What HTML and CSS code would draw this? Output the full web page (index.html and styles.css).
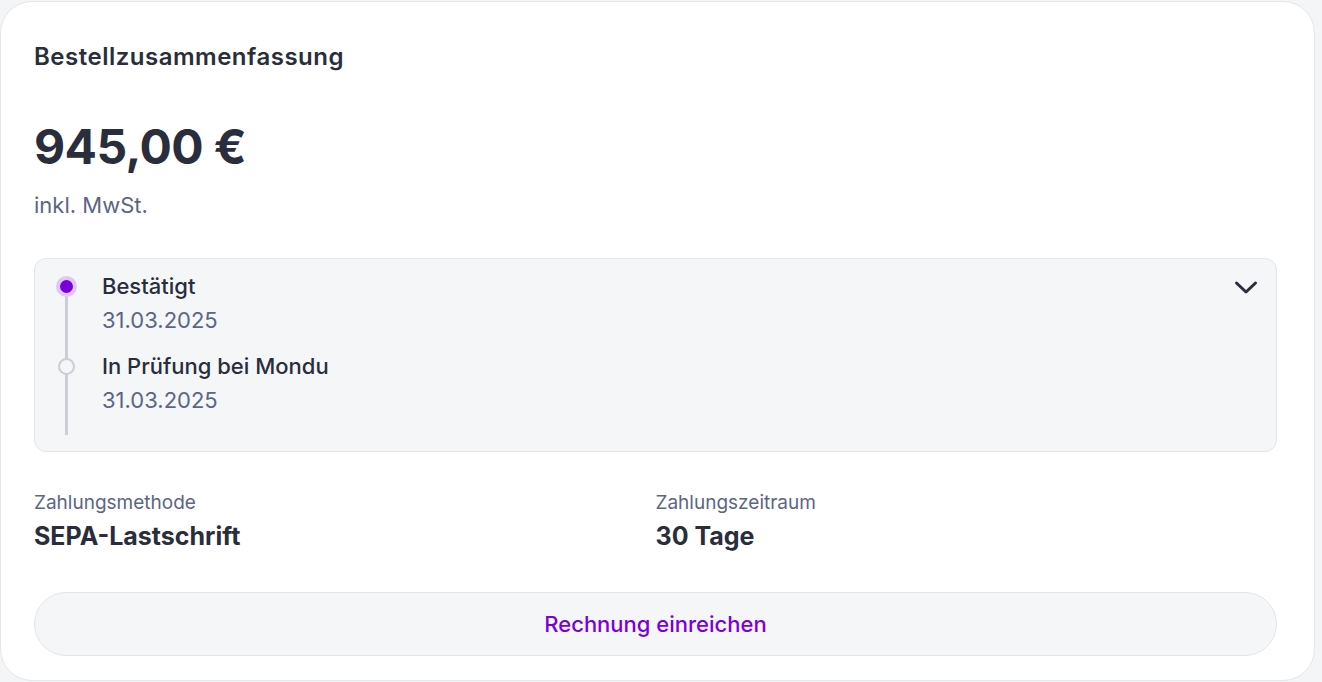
FILE: index.html
```html
<!DOCTYPE html>
<html lang="de">
<head>
<meta charset="utf-8">
<title>Bestellzusammenfassung</title>
<link rel="stylesheet" href="styles.css">
</head>
<body>
<section class="card">
  <h2 class="title">Bestellzusammenfassung</h2>
  <div class="amount">945,00 €</div>
  <div class="vat">inkl. MwSt.</div>

  <div class="timeline">
    <ol class="steps">
      <li class="step step-active">
        <span class="marker"></span>
        <div class="step-title">Bestätigt</div>
        <div class="step-date">31.03.2025</div>
      </li>
      <li class="step">
        <span class="marker"></span>
        <div class="step-title">In Prüfung bei Mondu</div>
        <div class="step-date">31.03.2025</div>
      </li>
    </ol>
    <svg class="chevron" width="24" height="24" viewBox="0 0 24 24" fill="none"><path d="M2.5 8 L12 17 L21.5 8" stroke="#2a2d3b" stroke-width="3" stroke-linecap="round" stroke-linejoin="round"/></svg>
  </div>

  <div class="details">
    <div class="detail">
      <div class="detail-label">Zahlungsmethode</div>
      <div class="detail-value">SEPA-Lastschrift</div>
    </div>
    <div class="detail">
      <div class="detail-label">Zahlungszeitraum</div>
      <div class="detail-value">30 Tage</div>
    </div>
  </div>

  <button class="action" type="button">Rechnung einreichen</button>
</section>
</body>
</html>
```

FILE: styles.css
```css
* { box-sizing: border-box; }
html, body { margin: 0; padding: 0; }
body {
  background: #f3f5f7;
  font-family: Inter, "Noto Sans", sans-serif;
  color: #2a2d3b;
  width: 1322px;
  height: 682px;
  overflow: hidden;
}
.card {
  margin: 1px 0 0 0;
  width: 1315px;
  height: 680px;
  background: #ffffff;
  border: 1px solid #e3e7eb;
  border-radius: 32px;
  padding: 39px 37px 0 33px;
}
.title {
  margin: 0;
  font-size: 24px;
  font-weight: 600;
  line-height: 32px;
  letter-spacing: 0.5px;
  color: #2a2d3b;
}
.amount {
  margin-top: 46px;
  font-size: 48px;
  font-weight: 700;
  line-height: 56px;
  letter-spacing: -0.6px;
  color: #2a2d3b;
}
.vat {
  margin-top: 17px;
  font-size: 22px;
  line-height: 26px;
  color: #5d6584;
}
.timeline {
  margin-top: 40px;
  background: #f4f6f8;
  border: 1px solid #e2e6ea;
  border-radius: 12px;
  height: 194px;
  display: flex;
  justify-content: space-between;
  align-items: flex-start;
  padding: 13px 18px 0 21px;
}
.steps {
  list-style: none;
  margin: 0;
  padding: 0;
  position: relative;
}
.steps::before {
  content: "";
  position: absolute;
  left: 9px;
  top: 13px;
  width: 3px;
  height: 150px;
  background: #ccced6;
}
.step {
  position: relative;
  padding-left: 46px;
  height: 80px;
}
.marker {
  position: absolute;
  left: 2px;
  top: 6px;
  width: 17px;
  height: 17px;
  border-radius: 50%;
  background: #f4f6f8;
  border: 2.5px solid #ccced6;
}
.step-active .marker {
  left: 0;
  top: 4px;
  width: 21px;
  height: 21px;
  background: #7a00d9;
  border: 4.5px solid #e2c6fa;
}
.step-title {
  font-size: 22px;
  font-weight: 500;
  line-height: 28px;
  color: #2a2d3b;
}
.step-date {
  margin-top: 6px;
  font-size: 22px;
  line-height: 28px;
  color: #5d6584;
}
.chevron {
  margin-top: 3px;
}
.details {
  margin-top: 39px;
  display: grid;
  grid-template-columns: 1fr 1fr;
}
.detail-label {
  font-size: 19px;
  line-height: 24px;
  color: #5d6584;
}
.detail-value {
  margin-top: 6px;
  font-size: 25px;
  font-weight: 700;
  line-height: 30px;
  color: #2a2d3b;
}
.action {
  display: block;
  width: 100%;
  margin-top: 41px;
  height: 64px;
  border-radius: 32px;
  background: #f4f6f8;
  border: 1px solid #e2e6ea;
  font-family: Inter, "Noto Sans", sans-serif;
  font-size: 22px;
  font-weight: 500;
  color: #7a00d9;
  cursor: pointer;
}
```
